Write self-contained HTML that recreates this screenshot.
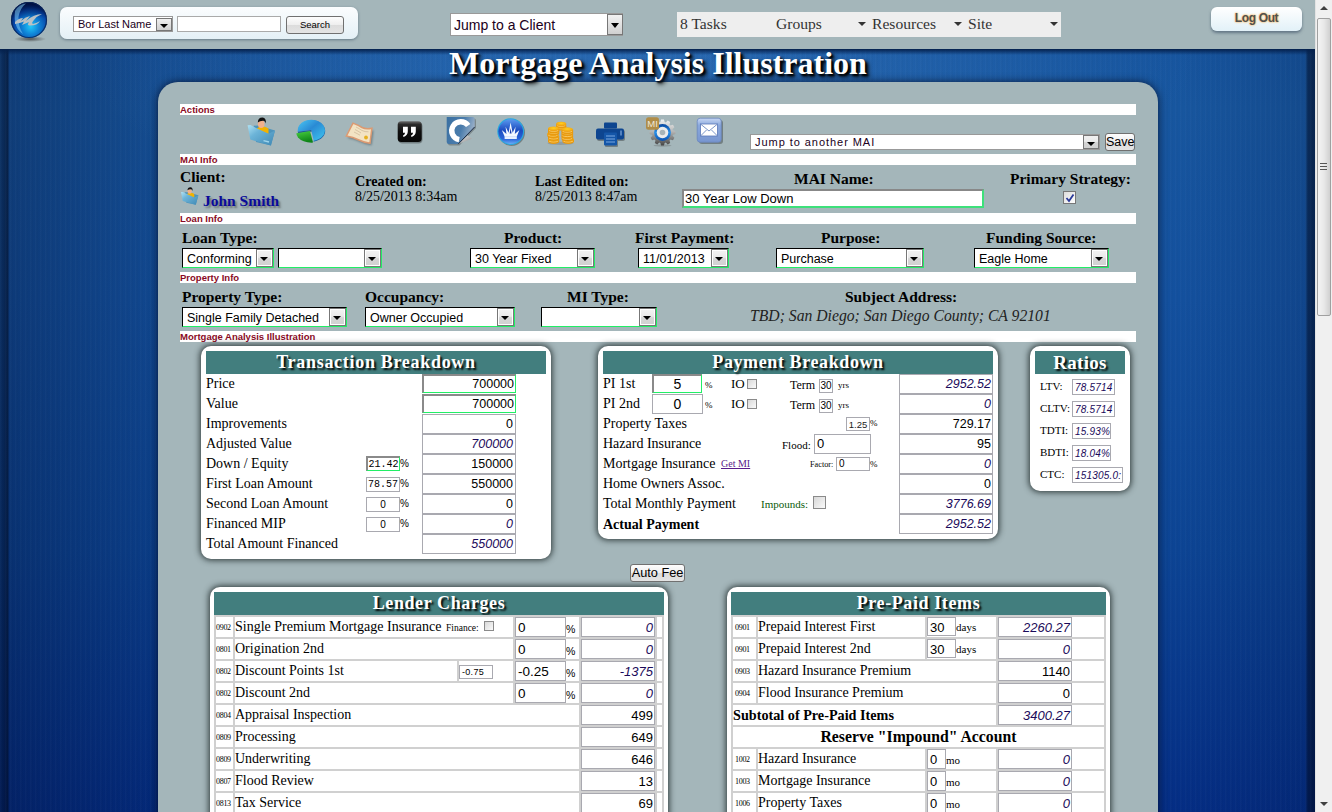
<!DOCTYPE html>
<html><head><meta charset="utf-8">
<style>
*{box-sizing:border-box;margin:0;padding:0}
html,body{width:1332px;height:812px;overflow:hidden}
body{position:relative;font-family:"Liberation Serif",serif;background:#0d3b7c}
.abs{position:absolute}
#hdr{position:absolute;left:0;top:0;width:1315px;height:49px;background:#a4b6ba}
#bg{position:absolute;left:0;top:49px;width:1315px;height:763px;
 background:repeating-linear-gradient(90deg,rgba(255,255,255,.018) 0,rgba(255,255,255,.018) 1px,rgba(0,0,0,.03) 2px,rgba(0,0,0,0) 3px,rgba(0,0,0,0) 5px),radial-gradient(ellipse 560px 170px at 640px 10px,rgba(90,160,230,.28),rgba(90,160,230,0)),
 linear-gradient(90deg,rgba(0,8,30,.45) 0,rgba(0,8,30,.68) 8px,rgba(0,10,40,.32) 9px,rgba(0,10,40,.14) 150px,rgba(0,10,40,.05) 300px,rgba(0,0,0,0) 450px,rgba(0,0,0,0) 1150px,rgba(0,10,40,.0) 1180px,rgba(0,10,40,.15) 1305px,rgba(0,8,30,.55) 1308px,rgba(0,8,30,.62) 1315px),
 linear-gradient(#16549e 0,#17569f 60px,#13509e 250px,#0c4494 500px,#042d84 763px)}
#bgtop{position:absolute;left:0;top:49px;width:1315px;height:6px;background:linear-gradient(#04204c,rgba(4,32,76,0))}
#sb{position:absolute;left:1315px;top:0;width:17px;height:812px;background:#f0f0f0;border-left:1px solid #e3e3e3}
#panel{position:absolute;left:158px;top:82px;width:1000px;height:740px;background:#a4b6ba;border-radius:20px 20px 0 0;box-shadow:0 0 8px rgba(0,0,20,.7)}
.bar{position:absolute;left:180px;width:956px;height:11px;background:#fff;font:bold 9.5px "Liberation Sans",sans-serif;color:#8a0a24;line-height:12px}
.lbl{position:absolute;font:bold 16px "Liberation Serif",serif;color:#000;white-space:nowrap}
.sel{position:absolute;height:20px;background:#fff;border-top:2px solid #222;border-left:2px solid #222;border-right:2px solid #3fe070;border-bottom:2px solid #3fe070;font:14px "Liberation Sans",sans-serif;color:#000;line-height:16px;padding-left:3px;white-space:nowrap;overflow:hidden}
.sel .dd{position:absolute;right:0;top:0;width:17px;height:16px;background:linear-gradient(#f4f4f4,#d8d8d8);border:1px solid #888}
.sel .dd:after{content:"";position:absolute;left:4px;top:6px;border-left:4px solid transparent;border-right:4px solid transparent;border-top:5px solid #000}

.s2{position:absolute;height:20px;background:#fff;border-top:1px solid #000;border-left:1px solid #000;border-right:1px solid #22ee66;border-bottom:1px solid #22ee66;font:12.5px "Liberation Sans",sans-serif;color:#000;line-height:20px;padding-left:4px;white-space:nowrap;overflow:hidden}
.dd{position:absolute;right:0;top:0;width:17px;height:18px;background:#fff;border:1px solid #777}
.dd:before{content:"";position:absolute;left:1px;top:1px;right:1px;bottom:1px;background:linear-gradient(#f2f2f2 0,#eaeaea 45%,#d6d6d6 55%,#d2d2d2 100%)}
.dd:after{content:"";position:absolute;left:3px;top:7px;border-left:4px solid transparent;border-right:4px solid transparent;border-top:4px solid #000}
.sx{position:absolute;font:bold 15.5px "Liberation Serif",serif;color:#000;white-space:nowrap;line-height:16px}
.box{position:absolute;background:#fff;border-radius:10px;box-shadow:0 0 6px 1px rgba(20,30,30,.85)}
.hd{position:absolute;background:#427e7e;color:#fff;text-align:center;font-family:"Liberation Serif",serif;font-weight:bold;text-shadow:2px 2px 2px #000;white-space:nowrap}
.t{position:absolute;white-space:nowrap;line-height:normal;color:#000}
.inp{position:absolute;background:#fff;border:1px solid #a9a9b0;white-space:nowrap;overflow:hidden;color:#000}
.inf{position:absolute;background:#fff;border-top:2px solid #8a8a8a;border-left:2px solid #8a8a8a;border-right:1px solid #22ee66;border-bottom:1px solid #22ee66;white-space:nowrap;overflow:hidden;color:#000}
.cb{position:absolute;border:1px solid #8a8a8a;background:linear-gradient(135deg,#d8d8d8,#fafafa)}
.btn{position:absolute;border-radius:3px;background:linear-gradient(#fdfdfd 0,#eeeeee 50%,#dcdcdc 51%,#e4e4e4 100%);border:1px solid #707070;color:#000;text-align:center;white-space:nowrap}
</style></head><body>
<div id="hdr"></div>
<div id="bg"></div>
<div id="bgtop"></div>
<div id="sb"><div class="abs" style="left:4px;top:6px;border-left:4px solid transparent;border-right:4px solid transparent;border-bottom:4px solid #404040"></div>
<div class="abs" style="left:1px;top:18px;width:14px;height:298px;border:1px solid #a0a0a0;border-radius:2px;background:linear-gradient(90deg,#f4f4f4,#e8e8e8 50%,#d0d0d0)"></div>
<div class="abs" style="left:4px;top:163px;width:7px;height:1px;background:#555;box-shadow:0 3px 0 #555,0 6px 0 #555"></div>
<div class="abs" style="left:4px;top:802px;border-left:4px solid transparent;border-right:4px solid transparent;border-top:4px solid #404040"></div></div>
<div id="panel"></div>


<!-- HEADER -->
<div class="abs" style="left:14px;top:36px;width:32px;height:6px;border-radius:50%;background:radial-gradient(closest-side,rgba(60,60,60,.8),rgba(60,60,60,0))"></div>
<svg class="abs" style="left:10px;top:1px" width="38" height="38" viewBox="0 0 38 38">
<defs>
<radialGradient id="gl" cx="0.55" cy="0.68" r="0.62"><stop offset="0" stop-color="#22c8f8"/><stop offset="0.35" stop-color="#0f86d8"/><stop offset="0.75" stop-color="#0646a8"/><stop offset="1" stop-color="#021e60"/></radialGradient>
<linearGradient id="gl2" x1="0" y1="0" x2="0" y2="1"><stop offset="0" stop-color="#000830" stop-opacity="0.7"/><stop offset="0.45" stop-color="#000830" stop-opacity="0"/></linearGradient>
</defs>
<circle cx="19" cy="19" r="18" fill="url(#gl)"/>
<circle cx="19" cy="19" r="18" fill="url(#gl2)"/>
<circle cx="19" cy="19" r="17.5" fill="none" stroke="#0a2458" stroke-width="1.2" opacity="0.8"/>
<path d="M5 10 Q9 3 16 2.5 Q10 7 8.5 16 Q8 25 13 33 Q3 27 5 10Z" fill="#8ad8ff" opacity="0.5"/>
<path d="M5 21 Q9 17 13 17 L11 20 Q15 16 20 15 L16 20 Q24 13 32 13 Q27 15 24 19 Q21 22 23 23 Q27 22 30 20 Q27 25 19 24.5 Q17 24 19 21 L12 24 L14 20.5 Q10 22 5 23Z" fill="#b9c1c5"/>
</svg>
<div class="abs" style="left:60px;top:7px;width:298px;height:32px;border-radius:7px;background:linear-gradient(#fbfdfe,#e4f0f6);box-shadow:0 1px 3px rgba(60,80,100,.6)"></div>
<div class="abs" style="left:73px;top:16px;width:100px;height:16px;background:#fff;border:1px solid #999;font:11px 'Liberation Sans',sans-serif;color:#200020;line-height:14px;padding-left:4px">Bor Last Name
 <div class="abs" style="left:82px;top:1px;width:16px;height:13px;background:linear-gradient(#f0f0f0,#cfcfcf);border:1px solid #777"><div class="abs" style="left:3px;top:5px;border-left:4px solid transparent;border-right:4px solid transparent;border-top:4px solid #000"></div></div>
</div>
<div class="abs" style="left:177px;top:16px;width:104px;height:16px;background:#fff;border:1px solid #aaa"></div>
<div class="abs" style="left:286px;top:16px;width:58px;height:18px;border-radius:3px;background:linear-gradient(#fdfdfd 0,#eeeeee 50%,#dcdcdc 51%,#e4e4e4 100%);border:1px solid #707070;font:9.5px 'Liberation Sans',sans-serif;color:#000;text-align:center;line-height:16px">Search</div>

<div class="abs" style="left:450px;top:13px;width:173px;height:23px;background:#fff;border:1px solid #999;font:14px 'Liberation Sans',sans-serif;color:#200020;line-height:22px;padding-left:3px">Jump to a Client
 <div class="abs" style="left:156px;top:0px;width:16px;height:21px;background:linear-gradient(#f2f2f2,#d0d0d0);border:1px solid #777"><div class="abs" style="left:3px;top:8px;border-left:4px solid transparent;border-right:4px solid transparent;border-top:5px solid #000"></div></div>
</div>

<div class="abs" style="left:677px;top:12px;width:384px;height:25px;background:#eeeeee;font:15.6px 'Liberation Serif',serif;color:#333;line-height:24px">
 <span class="abs" style="left:3px;top:0">8 Tasks</span>
 <span class="abs" style="left:99px;top:0">Groups</span>
 <span class="abs" style="left:181px;top:10px;border-left:4px solid transparent;border-right:4px solid transparent;border-top:4px solid #333"></span>
 <span class="abs" style="left:195px;top:0">Resources</span>
 <span class="abs" style="left:277px;top:10px;border-left:4px solid transparent;border-right:4px solid transparent;border-top:4px solid #333"></span>
 <span class="abs" style="left:291px;top:0">Site</span>
 <span class="abs" style="left:373px;top:10px;border-left:4px solid transparent;border-right:4px solid transparent;border-top:4px solid #333"></span>
</div>

<div class="abs" style="left:1211px;top:7px;width:91px;height:24px;border-radius:6px;background:linear-gradient(#ffffff,#e2f1f8);box-shadow:0 2px 3px rgba(70,90,110,.7);font:bold 12px 'Liberation Sans',sans-serif;letter-spacing:-0.35px;color:#505050;text-align:center;line-height:23px;text-shadow:0 0 2px #f8c47a,0 0 2px #f8c47a,0 0 1px #f8c47a">Log Out</div>

<div class="abs" style="left:440px;top:45px;width:436px;text-align:center;font:bold 32px 'Liberation Serif',serif;color:#fff;text-shadow:3px 3px 4px #000,2px 2px 2px #000;white-space:nowrap">Mortgage Analysis Illustration</div>
<div class="bar" style="top:104px">Actions</div>

<!-- ACTION ICONS -->
<svg class="abs" style="left:246px;top:116px" width="30" height="31" viewBox="0 0 30 31">
 <defs><linearGradient id="fo" x1="0" y1="0" x2="1" y2="1"><stop offset="0" stop-color="#b0e2f4"/><stop offset="0.35" stop-color="#6cb4d8"/><stop offset="1" stop-color="#3f88b4"/></linearGradient></defs>
 <path d="M7.6 9.7 L12 9.5 L29 14.5 L25 29.5 L10 26 Z" fill="#4d94bc"/>
 <path d="M10.4 13 Q13 10 16 10.5 Q20 10.5 22.5 12.5 L22.5 18 L10.4 15Z" fill="#f2b200"/>
 <ellipse cx="15.2" cy="8" rx="3.3" ry="4.1" fill="#f2b08c"/>
 <path d="M11.8 6.5 Q12 1.5 16.5 1.6 Q20.5 2 19.8 7.5 Q19 5 17.5 4.8 Q14 4.6 11.8 6.5Z" fill="#121212"/>
 <path d="M1.6 9.3 L4.5 9 L10 12 L22.7 17.7 L29 14.6 L24.8 29.5 L4.3 23.5 Z" fill="url(#fo)"/>
 <path d="M17.5 24.6 L23 26" stroke="#a0d4ea" stroke-width="1.3"/>
</svg>
<svg class="abs" style="left:296px;top:118px" width="31" height="27" viewBox="0 0 31 27">
 <defs><linearGradient id="pb" x1="0" y1="0" x2="1" y2="1"><stop offset="0" stop-color="#4cc8f4"/><stop offset="0.45" stop-color="#2a8ad4"/><stop offset="1" stop-color="#40c8f0"/></linearGradient>
 <linearGradient id="pg" x1="0" y1="0" x2="0.3" y2="1"><stop offset="0" stop-color="#4ad040"/><stop offset="1" stop-color="#0e8418"/></linearGradient></defs>
 <ellipse cx="15.6" cy="12.9" rx="13.6" ry="10.6" fill="#1a64a8"/>
 <ellipse cx="15.3" cy="12.3" rx="13.6" ry="10.6" fill="url(#pb)"/>
 <path d="M1.6 13.8 L15.2 11.9 L17.9 23.5 L14 23.8 Q5 22 1.6 13.8Z" fill="#a4b6ba"/>
 <path d="M1.6 13.8 L15.2 11.9 L15.8 13.5 L2.5 15.5Z" fill="#1c5a9a"/>
 <path d="M0.4 15.2 L14 13 L17 24.6 Q7 25 2 19.5 Q0.4 17.5 0.4 15.2Z" fill="url(#pg)"/>
</svg>
<svg class="abs" style="left:344px;top:120px" width="32" height="28" viewBox="0 0 32 28">
 <defs><filter id="cs" x="-20%" y="-20%" width="140%" height="140%"><feGaussianBlur stdDeviation="0.9"/></filter></defs>
 <path d="M10.5 5 Q15.5 7 19.5 9.5 Q23.5 11.5 29.4 10.2 L27.5 25.2 Q21.5 24.5 16.5 22 Q10.5 19 3.8 18.1 Z" fill="#3a4a50" opacity="0.55" filter="url(#cs)"/>
 <path d="M9 3.1 Q14 5 18 7.5 Q22 9.5 27.9 8.2 L26 23.2 Q20 22.5 15 20 Q9 17 2.3 16.1 Z" fill="#f3e3c3" stroke="#dc9a72" stroke-width="1.5"/>
 <path d="M12 7 Q15 8.5 18 10.5 Q21 12 24.5 11.8 M11 9.5 Q14 11 17 13 M10 12 Q13 13.5 16 15.2" stroke="#b8a080" stroke-width="0.6" fill="none" opacity="0.8"/>
 <circle cx="22" cy="17.5" r="1.9" fill="#e6b020"/>
</svg>
<svg class="abs" style="left:396px;top:120px" width="28" height="25" viewBox="0 0 28 25">
 <defs><linearGradient id="qg" x1="0" y1="0" x2="0" y2="1"><stop offset="0" stop-color="#6a6a6a"/><stop offset="0.15" stop-color="#2a2a2a"/><stop offset="0.5" stop-color="#0e0e0e"/><stop offset="1" stop-color="#080808"/></linearGradient></defs>
 <rect x="2.5" y="2.6" width="24" height="21" rx="4" fill="#000" opacity="0.3"/>
 <rect x="1.7" y="1.3" width="24" height="20.7" rx="3.5" fill="url(#qg)"/>
 <path d="M7 6.8 h4.8 v4.8 q0 3.8 -4.2 5.5 l-0.7 -1.3 q2 -1 2.2 -3 h-2.1z M15 6.8 h4.8 v4.8 q0 3.8 -4.2 5.5 l-0.7 -1.3 q2 -1 2.2 -3 h-2.1z" fill="#fff"/>
</svg>
<svg class="abs" style="left:446px;top:116px" width="31" height="31" viewBox="0 0 31 31">
 <defs><linearGradient id="cl" x1="0" y1="0" x2="1" y2="0.3"><stop offset="0" stop-color="#3a70a2"/><stop offset="0.6" stop-color="#4a7cac"/><stop offset="1" stop-color="#9ab0c8"/></linearGradient>
 <linearGradient id="cp" x1="0" y1="0" x2="1" y2="1"><stop offset="0" stop-color="#e8e8e8"/><stop offset="1" stop-color="#8a8a8a"/></linearGradient></defs>
 <path d="M2 2.5 h26 q2 0 2 2 V12 L13.5 29.5 H4 q-2 0 -2 -2Z" fill="#000" opacity="0.25"/>
 <path d="M0.7 1.1 h26 q2 0 2 2 V10.9 L12.2 28.1 H2.7 q-2 0 -2 -2Z" fill="url(#cl)"/>
 <path d="M22.2 9.6 A9.05 9.05 0 1 0 13.2 23.7" stroke="#fff" stroke-width="5.3" fill="none"/>
 <path d="M12.2 28.1 L25.9 22.8 L21.9 19.3 Z" fill="url(#cp)"/>
 <path d="M28.7 10.9 L12.2 28.1" stroke="#1a2a44" stroke-width="1"/>
</svg>
<svg class="abs" style="left:496px;top:117px" width="31" height="31" viewBox="0 0 31 31">
 <defs><linearGradient id="cr" x1="0" y1="0" x2="0" y2="1"><stop offset="0" stop-color="#5a98ee"/><stop offset="0.45" stop-color="#1c4cc0"/><stop offset="0.8" stop-color="#2a64d8"/><stop offset="1" stop-color="#6aaaf4"/></linearGradient></defs>
 <circle cx="15.6" cy="15.5" r="13.4" fill="#000" opacity="0.3"/>
 <circle cx="14.7" cy="14.6" r="13.4" fill="#28a8e0"/>
 <circle cx="14.7" cy="14.6" r="12.3" fill="url(#cr)"/>
 <path d="M8.6 19.5 L5.8 13 L10.4 17 L9.6 9.8 L12.6 15.8 L14.6 5.5 L16.6 15.8 L19.6 9.8 L18.8 17 L23.4 13 L20.8 19.5 Z" fill="#f4f8ff"/>
 <path d="M14.6 11 L13.6 16.5 L15.6 16.5Z" fill="#1a3aa8"/>
 <rect x="8.6" y="19.2" width="12.2" height="2.8" fill="#e8f0ff"/>
</svg>
<svg class="abs" style="left:546px;top:121px" width="29" height="24" viewBox="0 0 29 24">
<defs><radialGradient id="gct" cx="0.5" cy="0.4" r="0.6"><stop offset="0" stop-color="#ffd020"/><stop offset="1" stop-color="#f0a010"/></radialGradient></defs>
<ellipse cx="14.5" cy="22.3" rx="13" ry="1.6" fill="#6a7078" opacity="0.35"/>
<path d="M10.2 5.2 v2.4 a5 2.0 0 0 0 10 0 v-2.4Z" fill="#e89a10"/><path d="M11.2 7.0 a5 2.0 0 0 0 8 0" stroke="#ffe08a" stroke-width="0.8" fill="none" opacity="0.8"/><ellipse cx="15.2" cy="5.2" rx="5" ry="2.0" fill="url(#gct)"/>
<path d="M10.2 2.8 v2.4 a5 2.0 0 0 0 10 0 v-2.4Z" fill="#e89a10"/><path d="M11.2 4.6 a5 2.0 0 0 0 8 0" stroke="#ffe08a" stroke-width="0.8" fill="none" opacity="0.8"/><ellipse cx="15.2" cy="2.8" rx="5" ry="2.0" fill="url(#gct)"/>
<path d="M2.0 18.2 v2.6 a5.6 2.1 0 0 0 11.2 0 v-2.6Z" fill="#e89a10"/><path d="M3.0 20.1 a5.6 2.1 0 0 0 9.2 0" stroke="#ffe08a" stroke-width="0.8" fill="none" opacity="0.8"/><ellipse cx="7.6" cy="18.2" rx="5.6" ry="2.1" fill="url(#gct)"/>
<path d="M2.0 15.2 v2.6 a5.6 2.1 0 0 0 11.2 0 v-2.6Z" fill="#e89a10"/><path d="M3.0 17.1 a5.6 2.1 0 0 0 9.2 0" stroke="#ffe08a" stroke-width="0.8" fill="none" opacity="0.8"/><ellipse cx="7.6" cy="15.2" rx="5.6" ry="2.1" fill="url(#gct)"/>
<path d="M1.3 12.4 v2.6 a5.6 2.1 0 0 0 11.2 0 v-2.6Z" fill="#e89a10"/><path d="M2.3 14.3 a5.6 2.1 0 0 0 9.2 0" stroke="#ffe08a" stroke-width="0.8" fill="none" opacity="0.8"/><ellipse cx="6.9" cy="12.4" rx="5.6" ry="2.1" fill="url(#gct)"/>
<path d="M2.0 9.6 v2.6 a5.6 2.1 0 0 0 11.2 0 v-2.6Z" fill="#e89a10"/><path d="M3.0 11.5 a5.6 2.1 0 0 0 9.2 0" stroke="#ffe08a" stroke-width="0.8" fill="none" opacity="0.8"/><ellipse cx="7.6" cy="9.6" rx="5.6" ry="2.1" fill="url(#gct)"/>
<path d="M2.0 7.6 v2.6 a5.6 2.1 0 0 0 11.2 0 v-2.6Z" fill="#e89a10"/><path d="M3.0 9.5 a5.6 2.1 0 0 0 9.2 0" stroke="#ffe08a" stroke-width="0.8" fill="none" opacity="0.8"/><ellipse cx="7.6" cy="7.6" rx="5.6" ry="2.1" fill="url(#gct)"/>
<path d="M16.4 18.2 v2.6 a5.8 2.1 0 0 0 11.6 0 v-2.6Z" fill="#e89a10"/><path d="M17.4 20.1 a5.8 2.1 0 0 0 9.6 0" stroke="#ffe08a" stroke-width="0.8" fill="none" opacity="0.8"/><ellipse cx="22.2" cy="18.2" rx="5.8" ry="2.1" fill="url(#gct)"/>
<path d="M15.5 15.6 v2.6 a5.8 2.1 0 0 0 11.6 0 v-2.6Z" fill="#e89a10"/><path d="M16.5 17.5 a5.8 2.1 0 0 0 9.6 0" stroke="#ffe08a" stroke-width="0.8" fill="none" opacity="0.8"/><ellipse cx="21.3" cy="15.6" rx="5.8" ry="2.1" fill="url(#gct)"/>
<path d="M15.5 12.8 v2.6 a5.8 2.1 0 0 0 11.6 0 v-2.6Z" fill="#e89a10"/><path d="M16.5 14.7 a5.8 2.1 0 0 0 9.6 0" stroke="#ffe08a" stroke-width="0.8" fill="none" opacity="0.8"/><ellipse cx="21.3" cy="12.8" rx="5.8" ry="2.1" fill="url(#gct)"/>
<path d="M15.5 10.2 v2.6 a5.8 2.1 0 0 0 11.6 0 v-2.6Z" fill="#e89a10"/><path d="M16.5 12.1 a5.8 2.1 0 0 0 9.6 0" stroke="#ffe08a" stroke-width="0.8" fill="none" opacity="0.8"/><ellipse cx="21.3" cy="10.2" rx="5.8" ry="2.1" fill="url(#gct)"/>
<path d="M15.5 8.4 v2.6 a5.8 2.1 0 0 0 11.6 0 v-2.6Z" fill="#e89a10"/><path d="M16.5 10.3 a5.8 2.1 0 0 0 9.6 0" stroke="#ffe08a" stroke-width="0.8" fill="none" opacity="0.8"/><ellipse cx="21.3" cy="8.4" rx="5.8" ry="2.1" fill="url(#gct)"/>
</svg>
<svg class="abs" style="left:595px;top:122px" width="31" height="25" viewBox="0 0 31 25">
 <g fill="#000" opacity="0.3" transform="translate(1,1)"><rect x="1" y="7" width="28" height="11" rx="2"/><rect x="9" y="11" width="13" height="13" rx="1"/></g>
 <rect x="9" y="0.5" width="13" height="6" rx="1" fill="#0d4590"/>
 <rect x="1" y="6.5" width="28" height="11" rx="2" fill="#0d4590"/>
 <rect x="9" y="10.5" width="13" height="13" rx="1" fill="#1456a8"/>
 <path d="M11 14 h9 M11 17 h9 M11 20 h9" stroke="#7aa8e0" stroke-width="1"/>
 <path d="M26 8.5 v5" stroke="#9cc0ee" stroke-width="1"/>
</svg>
<svg class="abs" style="left:645px;top:116px" width="32" height="31" viewBox="0 0 32 31">
 <defs><linearGradient id="gr" x1="0" y1="0" x2="0" y2="1"><stop offset="0" stop-color="#f2f2f2"/><stop offset="0.45" stop-color="#b8b8b8"/><stop offset="1" stop-color="#454545"/></linearGradient>
 <linearGradient id="gb" x1="0" y1="0" x2="0" y2="1"><stop offset="0" stop-color="#0a48a0"/><stop offset="0.5" stop-color="#2a90e8"/><stop offset="1" stop-color="#0a50b0"/></linearGradient></defs>
 <ellipse cx="17.5" cy="29.5" rx="9" ry="1.2" fill="#555" opacity="0.3"/>
 <g transform="translate(17.5,16.5)">
 <path d="M10.38 -2.15 L12.92 -1.43 L12.92 1.43 L10.38 2.15 L10.06 3.33 L11.90 5.23 L10.48 7.70 L7.92 7.05 L7.05 7.92 L7.70 10.48 L5.23 11.90 L3.33 10.06 L2.15 10.38 L1.43 12.92 L-1.43 12.92 L-2.15 10.38 L-3.33 10.06 L-5.23 11.90 L-7.70 10.48 L-7.05 7.92 L-7.92 7.05 L-10.48 7.70 L-11.90 5.23 L-10.06 3.33 L-10.38 2.15 L-12.92 1.43 L-12.92 -1.43 L-10.38 -2.15 L-10.06 -3.33 L-11.90 -5.23 L-10.48 -7.70 L-7.92 -7.05 L-7.05 -7.92 L-7.70 -10.48 L-5.23 -11.90 L-3.33 -10.06 L-2.15 -10.38 L-1.43 -12.92 L1.43 -12.92 L2.15 -10.38 L3.33 -10.06 L5.23 -11.90 L7.70 -10.48 L7.05 -7.92 L7.92 -7.05 L10.48 -7.70 L11.90 -5.23 L10.06 -3.33Z" fill="url(#gr)"/>
 <circle r="8.4" fill="url(#gb)"/>
 <circle r="5.8" fill="#ececec"/>
 <circle r="2.8" fill="#a8b4b8"/>
 </g>
 <rect x="1" y="1.3" width="13" height="12.5" rx="2.5" fill="#b08d48"/>
 <text x="7.5" y="11.2" font-family="Liberation Sans" font-size="9.5" fill="#efe8d8" text-anchor="middle">MI</text>
</svg>
<svg class="abs" style="left:696px;top:117px" width="30" height="30" viewBox="0 0 30 30">
 <defs><linearGradient id="ml" x1="0" y1="0" x2="0" y2="1"><stop offset="0" stop-color="#c8d8f4"/><stop offset="0.3" stop-color="#8aa8dc"/><stop offset="1" stop-color="#7896d0"/></linearGradient></defs>
 <rect x="3" y="3" width="24" height="24" rx="3" fill="#000" opacity="0.3"/>
 <rect x="1.2" y="1.2" width="24" height="24" rx="3" fill="url(#ml)" stroke="#6a88c0" stroke-width="0.8"/>
 <rect x="4.5" y="7" width="17" height="12" fill="#fff" stroke="#5a78b8" stroke-width="0.8"/>
 <path d="M4.5 7 L13 14 L21.5 7 M4.5 19 L10.5 13 M21.5 19 L15.5 13" stroke="#6a88c0" stroke-width="0.9" fill="none"/>
</svg>
<div class="bar" style="top:154px">MAI Info</div>
<div class="bar" style="top:213px">Loan Info</div>
<div class="bar" style="top:272px">Property Info</div>

<!-- JUMP MAI -->
<div class="abs" style="left:750px;top:134px;width:350px;height:16px;background:#fff;border:1px solid #999;font:11px 'Liberation Sans',sans-serif;letter-spacing:0.95px;color:#200020;line-height:15px;padding-left:4px">Jump to another MAI
 <div class="abs" style="left:332px;top:0px;width:16px;height:14px;background:linear-gradient(#f0f0f0,#eaeaea 45%,#d4d4d4 55%,#d0d0d0);border:1px solid #777"><div class="abs" style="left:3px;top:6px;border-left:4px solid transparent;border-right:4px solid transparent;border-top:4px solid #000"></div></div>
</div>
<div class="abs" style="left:1105px;top:133px;width:30px;height:18px;border-radius:3px;background:linear-gradient(#fdfdfd 0,#eeeeee 50%,#dcdcdc 51%,#e4e4e4 100%);border:1px solid #707070;font:12.5px 'Liberation Sans',sans-serif;color:#000;text-align:center;line-height:16px">Save</div>

<!-- MAI INFO -->
<div class="sx" style="left:180px;top:169px">Client:</div>
<svg class="abs" style="left:180px;top:186px" width="19" height="20" viewBox="0 0 30 31">
 <path d="M7.6 9.7 L12 9.5 L29 14.5 L25 29.5 L10 26 Z" fill="#4d94bc"/>
 <path d="M10.4 13 Q13 10 16 10.5 Q20 10.5 22.5 12.5 L22.5 18 L10.4 15Z" fill="#f2b200"/>
 <ellipse cx="15.2" cy="8" rx="3.3" ry="4.1" fill="#f2b08c"/>
 <path d="M11.8 6.5 Q12 1.5 16.5 1.6 Q20.5 2 19.8 7.5 Q19 5 17.5 4.8 Q14 4.6 11.8 6.5Z" fill="#121212"/>
 <path d="M1.6 9.3 L4.5 9 L10 12 L22.7 17.7 L29 14.6 L24.8 29.5 L4.3 23.5 Z" fill="url(#fo)"/>
</svg>
<div class="sx" style="left:203px;top:193px;color:#0a0a9a;text-shadow:2px 2px 2px rgba(60,60,60,.55)">John Smith</div>
<div class="abs" style="left:355px;top:173px;font:bold 14.2px 'Liberation Serif',serif;white-space:nowrap">Created on:</div>
<div class="abs" style="left:355px;top:189px;font:14px 'Liberation Serif',serif;white-space:nowrap">8/25/2013 8:34am</div>
<div class="abs" style="left:535px;top:173px;font:bold 14.2px 'Liberation Serif',serif;white-space:nowrap">Last Edited on:</div>
<div class="abs" style="left:535px;top:189px;font:14px 'Liberation Serif',serif;white-space:nowrap">8/25/2013 8:47am</div>
<div class="sx" style="left:794px;top:171px">MAI Name:</div>
<div class="abs" style="left:682px;top:189px;width:302px;height:19px;background:#fff;border-top:2px solid #888;border-left:2px solid #888;border-right:2px solid #3de07a;border-bottom:2px solid #3de07a;font:13px 'Liberation Sans',sans-serif;line-height:16px;padding-left:1px;white-space:nowrap">30 Year Low Down</div>
<div class="sx" style="left:1010px;top:171px">Primary Strategy:</div>
<div class="abs" style="left:1063px;top:191px;width:13px;height:13px;border:1px solid #777;background:linear-gradient(135deg,#dcdcdc,#fff)"><svg class="abs" style="left:1px;top:1px" width="10" height="10" viewBox="0 0 10 10"><path d="M1.5 5 L4 8 L8.5 1.5" stroke="#2a3a9a" stroke-width="1.8" fill="none"/></svg></div>

<!-- LOAN INFO -->
<div class="sx" style="left:182px;top:230px">Loan Type:</div>
<div class="s2" style="left:182px;top:248px;width:92px">Conforming<div class="dd"></div></div>
<div class="s2" style="left:278px;top:248px;width:104px"><div class="dd"></div></div>
<div class="sx" style="left:504px;top:230px">Product:</div>
<div class="s2" style="left:470px;top:248px;width:125px">30 Year Fixed<div class="dd"></div></div>
<div class="sx" style="left:635px;top:230px">First Payment:</div>
<div class="s2" style="left:638px;top:248px;width:91px">11/01/2013<div class="dd"></div></div>
<div class="sx" style="left:821px;top:230px">Purpose:</div>
<div class="s2" style="left:776px;top:248px;width:148px">Purchase<div class="dd"></div></div>
<div class="sx" style="left:986px;top:230px">Funding Source:</div>
<div class="s2" style="left:974px;top:248px;width:135px">Eagle Home<div class="dd"></div></div>

<!-- PROPERTY INFO -->
<div class="sx" style="left:182px;top:289px">Property Type:</div>
<div class="s2" style="left:182px;top:307px;width:165px">Single Family Detached<div class="dd"></div></div>
<div class="sx" style="left:365px;top:289px">Occupancy:</div>
<div class="s2" style="left:365px;top:307px;width:150px">Owner Occupied<div class="dd"></div></div>
<div class="sx" style="left:567px;top:289px">MI Type:</div>
<div class="s2" style="left:541px;top:307px;width:116px"><div class="dd"></div></div>
<div class="sx" style="left:845px;top:289px">Subject Address:</div>
<div class="abs" style="left:750px;top:307px;font:italic 15.7px 'Liberation Serif',serif;white-space:nowrap;color:#222">TBD; San Diego; San Diego County; CA 92101</div>
<div class="bar" style="top:331px">Mortgage Analysis Illustration</div>

<div class="box" style="left:201px;top:346px;width:350px;height:213px"></div>
<div class="hd" style="left:206px;top:351px;width:340px;height:23px;font-size:18px;letter-spacing:0.7px;line-height:23px">Transaction Breakdown</div>
<div class="t" style="left:206px;top:376px;font:14px 'Liberation Serif',serif;">Price</div>
<div class="inf" style="left:422px;top:374px;width:94px;height:19px;text-align:right;font:12.5px 'Liberation Sans',sans-serif;line-height:17px;padding:0 1px;">700000</div>
<div class="t" style="left:206px;top:396px;font:14px 'Liberation Serif',serif;">Value</div>
<div class="inf" style="left:422px;top:394px;width:94px;height:19px;text-align:right;font:12.5px 'Liberation Sans',sans-serif;line-height:17px;padding:0 1px;">700000</div>
<div class="t" style="left:206px;top:416px;font:14px 'Liberation Serif',serif;">Improvements</div>
<div class="inp" style="left:422px;top:414px;width:94px;height:20px;text-align:right;font:12.5px 'Liberation Sans',sans-serif;line-height:18px;padding:0 2px;">0</div>
<div class="t" style="left:206px;top:436px;font:14px 'Liberation Serif',serif;">Adjusted Value</div>
<div class="inp" style="left:422px;top:434px;width:94px;height:20px;text-align:right;font:italic 12.5px 'Liberation Sans',sans-serif;line-height:18px;padding:0 2px;color:#1a0a5a;">700000</div>
<div class="t" style="left:206px;top:456px;font:14px 'Liberation Serif',serif;">Down / Equity</div>
<div class="inp" style="left:422px;top:454px;width:94px;height:20px;text-align:right;font:12.5px 'Liberation Sans',sans-serif;line-height:18px;padding:0 2px;">150000</div>
<div class="t" style="left:206px;top:476px;font:14px 'Liberation Serif',serif;">First Loan Amount</div>
<div class="inp" style="left:422px;top:474px;width:94px;height:20px;text-align:right;font:12.5px 'Liberation Sans',sans-serif;line-height:18px;padding:0 2px;">550000</div>
<div class="t" style="left:206px;top:496px;font:14px 'Liberation Serif',serif;">Second Loan Amount</div>
<div class="inp" style="left:422px;top:494px;width:94px;height:20px;text-align:right;font:12.5px 'Liberation Sans',sans-serif;line-height:18px;padding:0 2px;">0</div>
<div class="t" style="left:206px;top:516px;font:14px 'Liberation Serif',serif;">Financed MIP</div>
<div class="inp" style="left:422px;top:514px;width:94px;height:20px;text-align:right;font:italic 12.5px 'Liberation Sans',sans-serif;line-height:18px;padding:0 2px;color:#1a0a5a;">0</div>
<div class="t" style="left:206px;top:536px;font:14px 'Liberation Serif',serif;">Total Amount Financed</div>
<div class="inp" style="left:422px;top:534px;width:94px;height:20px;text-align:right;font:italic 12.5px 'Liberation Sans',sans-serif;line-height:18px;padding:0 2px;color:#1a0a5a;">550000</div>
<div class="inf" style="left:366px;top:456px;width:34px;height:15px;text-align:center;font:10px 'Liberation Mono',monospace;line-height:13px;padding:0 0px;">21.42</div>
<div class="t" style="left:400px;top:458px;font:10px 'Liberation Sans',sans-serif;">%</div>
<div class="inp" style="left:366px;top:477px;width:34px;height:15px;text-align:center;font:10px 'Liberation Mono',monospace;line-height:13px;padding:0 0px;">78.57</div>
<div class="t" style="left:400px;top:478px;font:10px 'Liberation Sans',sans-serif;">%</div>
<div class="inp" style="left:366px;top:497px;width:34px;height:15px;text-align:center;font:10px 'Liberation Sans',sans-serif;line-height:13px;padding:0 0px;">0</div>
<div class="t" style="left:400px;top:498px;font:10px 'Liberation Sans',sans-serif;">%</div>
<div class="inp" style="left:366px;top:517px;width:34px;height:15px;text-align:center;font:10px 'Liberation Sans',sans-serif;line-height:13px;padding:0 0px;">0</div>
<div class="t" style="left:400px;top:518px;font:10px 'Liberation Sans',sans-serif;">%</div>
<div class="box" style="left:598px;top:346px;width:400px;height:193px"></div>
<div class="hd" style="left:603px;top:351px;width:390px;height:23px;font-size:18px;letter-spacing:0.6px;line-height:23px">Payment Breakdown</div>
<div class="t" style="left:603px;top:376px;font:14px 'Liberation Serif',serif;">PI 1st</div>
<div class="t" style="left:603px;top:396px;font:14px 'Liberation Serif',serif;">PI 2nd</div>
<div class="t" style="left:603px;top:416px;font:14px 'Liberation Serif',serif;">Property Taxes</div>
<div class="t" style="left:603px;top:436px;font:14px 'Liberation Serif',serif;">Hazard Insurance</div>
<div class="t" style="left:603px;top:456px;font:14px 'Liberation Serif',serif;">Mortgage Insurance</div>
<div class="t" style="left:603px;top:476px;font:14px 'Liberation Serif',serif;">Home Owners Assoc.</div>
<div class="t" style="left:603px;top:496px;font:14px 'Liberation Serif',serif;">Total Monthly Payment</div>
<div class="t" style="left:603px;top:517px;font:bold 14px 'Liberation Serif',serif;">Actual Payment</div>
<div class="inp" style="left:899px;top:374px;width:94px;height:20px;text-align:right;font:italic 12.5px 'Liberation Sans',sans-serif;line-height:18px;padding:0 1px;color:#1a0a5a;">2952.52</div>
<div class="inp" style="left:899px;top:394px;width:94px;height:20px;text-align:right;font:italic 12.5px 'Liberation Sans',sans-serif;line-height:18px;padding:0 1px;color:#1a0a5a;">0</div>
<div class="inp" style="left:899px;top:414px;width:94px;height:20px;text-align:right;font:12.5px 'Liberation Sans',sans-serif;line-height:18px;padding:0 1px;">729.17</div>
<div class="inp" style="left:899px;top:434px;width:94px;height:20px;text-align:right;font:12.5px 'Liberation Sans',sans-serif;line-height:18px;padding:0 1px;">95</div>
<div class="inp" style="left:899px;top:454px;width:94px;height:20px;text-align:right;font:italic 12.5px 'Liberation Sans',sans-serif;line-height:18px;padding:0 1px;color:#1a0a5a;">0</div>
<div class="inp" style="left:899px;top:474px;width:94px;height:20px;text-align:right;font:12.5px 'Liberation Sans',sans-serif;line-height:18px;padding:0 1px;">0</div>
<div class="inp" style="left:899px;top:494px;width:94px;height:20px;text-align:right;font:italic 12.5px 'Liberation Sans',sans-serif;line-height:18px;padding:0 1px;color:#1a0a5a;">3776.69</div>
<div class="inp" style="left:899px;top:514px;width:94px;height:20px;text-align:right;font:italic 12.5px 'Liberation Sans',sans-serif;line-height:18px;padding:0 1px;color:#1a0a5a;">2952.52</div>
<div class="inf" style="left:652px;top:374px;width:50px;height:19px;text-align:center;font:14px 'Liberation Sans',sans-serif;line-height:17px;padding:0 3px;">5</div>
<div class="inp" style="left:652px;top:394px;width:51px;height:20px;text-align:center;font:14px 'Liberation Sans',sans-serif;line-height:18px;padding:0 3px;">0</div>
<div class="t" style="left:705px;top:380px;font:9px 'Liberation Serif',serif;">%</div>
<div class="t" style="left:731px;top:376px;font:13px 'Liberation Serif',serif;">IO</div>
<div class="cb" style="left:747px;top:379px;width:10px;height:10px"></div>
<div class="t" style="left:790px;top:378px;font:12px 'Liberation Serif',serif;">Term</div>
<div class="inp" style="left:819px;top:379px;width:14px;height:14px;text-align:center;font:10px 'Liberation Sans',sans-serif;line-height:12px;padding:0 0px;">30</div>
<div class="t" style="left:838px;top:380px;font:9px 'Liberation Serif',serif;">yrs</div>
<div class="t" style="left:705px;top:400px;font:9px 'Liberation Serif',serif;">%</div>
<div class="t" style="left:731px;top:396px;font:13px 'Liberation Serif',serif;">IO</div>
<div class="cb" style="left:747px;top:399px;width:10px;height:10px"></div>
<div class="t" style="left:790px;top:398px;font:12px 'Liberation Serif',serif;">Term</div>
<div class="inp" style="left:819px;top:399px;width:14px;height:14px;text-align:center;font:10px 'Liberation Sans',sans-serif;line-height:12px;padding:0 0px;">30</div>
<div class="t" style="left:838px;top:400px;font:9px 'Liberation Serif',serif;">yrs</div>
<div class="inp" style="left:846px;top:417px;width:24px;height:14px;text-align:center;font:9.5px 'Liberation Sans',sans-serif;line-height:12px;padding:0 0px;padding-top:1px;color:#222">1.25</div>
<div class="t" style="left:870px;top:418px;font:9px 'Liberation Serif',serif;">%</div>
<div class="t" style="left:782px;top:439px;font:11px 'Liberation Serif',serif;">Flood:</div>
<div class="inp" style="left:814px;top:434px;width:57px;height:20px;text-align:left;font:13px 'Liberation Sans',sans-serif;line-height:18px;padding:0 2px;">0</div>
<div class="t" style="left:721px;top:458px;font:10px 'Liberation Serif',serif;color:#5a1a8b;text-decoration:underline">Get MI</div>
<div class="t" style="left:810px;top:460px;font:8.25px 'Liberation Serif',serif;">Factor:</div>
<div class="inp" style="left:836px;top:457px;width:34px;height:14px;text-align:left;font:10px 'Liberation Sans',sans-serif;line-height:12px;padding:0 2px;">0</div>
<div class="t" style="left:870px;top:459px;font:9px 'Liberation Serif',serif;">%</div>
<div class="t" style="left:761px;top:498px;font:11px 'Liberation Serif',serif;color:#0a5a0a">Impounds:</div>
<div class="cb" style="left:813px;top:496px;width:13px;height:13px"></div>
<div class="box" style="left:1030px;top:346px;width:100px;height:145px"></div>
<div class="hd" style="left:1035px;top:351px;width:90px;height:23px;font-size:19px;letter-spacing:0.3px;line-height:23px">Ratios</div>
<div class="t" style="left:1040px;top:380px;font:11px 'Liberation Serif',serif;">LTV:</div>
<div class="inp" style="left:1072px;top:379px;width:43px;height:16px;text-align:left;font:italic 10px 'Liberation Sans',sans-serif;line-height:14px;padding:0 2px;color:#1a0a5a;overflow:hidden;white-space:nowrap;padding-top:1px;letter-spacing:0.2px">78.5714</div>
<div class="t" style="left:1040px;top:402px;font:11px 'Liberation Serif',serif;">CLTV:</div>
<div class="inp" style="left:1072px;top:401px;width:43px;height:16px;text-align:left;font:italic 10px 'Liberation Sans',sans-serif;line-height:14px;padding:0 2px;color:#1a0a5a;overflow:hidden;white-space:nowrap;padding-top:1px;letter-spacing:0.2px">78.5714</div>
<div class="t" style="left:1040px;top:424px;font:11px 'Liberation Serif',serif;">TDTI:</div>
<div class="inp" style="left:1072px;top:423px;width:39px;height:16px;text-align:left;font:italic 10px 'Liberation Sans',sans-serif;line-height:14px;padding:0 2px;color:#1a0a5a;overflow:hidden;white-space:nowrap;padding-top:1px;letter-spacing:0.2px">15.93%</div>
<div class="t" style="left:1040px;top:446px;font:11px 'Liberation Serif',serif;">BDTI:</div>
<div class="inp" style="left:1072px;top:445px;width:39px;height:16px;text-align:left;font:italic 10px 'Liberation Sans',sans-serif;line-height:14px;padding:0 2px;color:#1a0a5a;overflow:hidden;white-space:nowrap;padding-top:1px;letter-spacing:0.2px">18.04%</div>
<div class="t" style="left:1040px;top:468px;font:11px 'Liberation Serif',serif;">CTC:</div>
<div class="inp" style="left:1072px;top:467px;width:51px;height:16px;text-align:left;font:italic 10px 'Liberation Sans',sans-serif;line-height:14px;padding:0 2px;color:#1a0a5a;overflow:hidden;white-space:nowrap;padding-top:1px;letter-spacing:0.2px">151305.0:</div>
<div class="box" style="left:210px;top:587px;width:458px;height:253px"></div>
<div class="hd" style="left:214px;top:592px;width:450px;height:23px;font-size:18px;letter-spacing:0.6px;line-height:23px">Lender Charges</div>
<div class="abs" style="left:214px;top:615px;width:450px;height:230px;background:#d0d0d0"></div>
<div class="abs" style="left:216px;top:617px;width:17px;height:20px;background:#fff"></div>
<div class="t" style="left:216px;top:623px;font:8px 'Liberation Serif',serif;letter-spacing:-0.3px">0902</div>
<div class="abs" style="left:235px;top:617px;width:278px;height:20px;background:#fff"></div>
<div class="t" style="left:235px;top:619px;font:14px 'Liberation Serif',serif;">Single Premium Mortgage Insurance</div>
<div class="inp" style="left:515px;top:617px;width:51px;height:20px;text-align:left;font:13.5px 'Liberation Sans',sans-serif;line-height:18px;padding:0 2px;padding-top:1px">0</div>
<div class="abs" style="left:566px;top:617px;width:13px;height:20px;background:#fff"></div>
<div class="t" style="left:566px;top:623px;font:10.5px 'Liberation Sans',sans-serif;">%</div>
<div class="inp" style="left:581px;top:617px;width:74px;height:20px;text-align:right;font:italic 13px 'Liberation Sans',sans-serif;line-height:18px;padding:0 1px;color:#1a0a5a;padding-top:1px">0</div>
<div class="abs" style="left:657px;top:617px;width:5px;height:20px;background:#fff"></div>
<div class="abs" style="left:216px;top:639px;width:17px;height:20px;background:#fff"></div>
<div class="t" style="left:216px;top:645px;font:8px 'Liberation Serif',serif;letter-spacing:-0.3px">0801</div>
<div class="abs" style="left:235px;top:639px;width:278px;height:20px;background:#fff"></div>
<div class="t" style="left:235px;top:641px;font:14px 'Liberation Serif',serif;">Origination 2nd</div>
<div class="inp" style="left:515px;top:639px;width:51px;height:20px;text-align:left;font:13.5px 'Liberation Sans',sans-serif;line-height:18px;padding:0 2px;padding-top:1px">0</div>
<div class="abs" style="left:566px;top:639px;width:13px;height:20px;background:#fff"></div>
<div class="t" style="left:566px;top:645px;font:10.5px 'Liberation Sans',sans-serif;">%</div>
<div class="inp" style="left:581px;top:639px;width:74px;height:20px;text-align:right;font:italic 13px 'Liberation Sans',sans-serif;line-height:18px;padding:0 1px;color:#1a0a5a;padding-top:1px">0</div>
<div class="abs" style="left:657px;top:639px;width:5px;height:20px;background:#fff"></div>
<div class="abs" style="left:216px;top:661px;width:17px;height:20px;background:#fff"></div>
<div class="t" style="left:216px;top:667px;font:8px 'Liberation Serif',serif;letter-spacing:-0.3px">0802</div>
<div class="abs" style="left:235px;top:661px;width:222px;height:20px;background:#fff"></div>
<div class="abs" style="left:459px;top:661px;width:54px;height:20px;background:#fff"></div>
<div class="inp" style="left:459px;top:665px;width:34px;height:14px;text-align:left;font:9px 'Liberation Sans',sans-serif;line-height:12px;padding:0 2px;letter-spacing:0.3px">-0.75</div>
<div class="t" style="left:235px;top:663px;font:14px 'Liberation Serif',serif;">Discount Points 1st</div>
<div class="inp" style="left:515px;top:661px;width:51px;height:20px;text-align:left;font:13.5px 'Liberation Sans',sans-serif;line-height:18px;padding:0 2px;padding-top:1px">-0.25</div>
<div class="abs" style="left:566px;top:661px;width:13px;height:20px;background:#fff"></div>
<div class="t" style="left:566px;top:667px;font:10.5px 'Liberation Sans',sans-serif;">%</div>
<div class="inp" style="left:581px;top:661px;width:74px;height:20px;text-align:right;font:italic 13px 'Liberation Sans',sans-serif;line-height:18px;padding:0 1px;color:#1a0a5a;padding-top:1px">-1375</div>
<div class="abs" style="left:657px;top:661px;width:5px;height:20px;background:#fff"></div>
<div class="abs" style="left:216px;top:683px;width:17px;height:20px;background:#fff"></div>
<div class="t" style="left:216px;top:689px;font:8px 'Liberation Serif',serif;letter-spacing:-0.3px">0802</div>
<div class="abs" style="left:235px;top:683px;width:278px;height:20px;background:#fff"></div>
<div class="t" style="left:235px;top:685px;font:14px 'Liberation Serif',serif;">Discount 2nd</div>
<div class="inp" style="left:515px;top:683px;width:51px;height:20px;text-align:left;font:13.5px 'Liberation Sans',sans-serif;line-height:18px;padding:0 2px;padding-top:1px">0</div>
<div class="abs" style="left:566px;top:683px;width:13px;height:20px;background:#fff"></div>
<div class="t" style="left:566px;top:689px;font:10.5px 'Liberation Sans',sans-serif;">%</div>
<div class="inp" style="left:581px;top:683px;width:74px;height:20px;text-align:right;font:italic 13px 'Liberation Sans',sans-serif;line-height:18px;padding:0 1px;color:#1a0a5a;padding-top:1px">0</div>
<div class="abs" style="left:657px;top:683px;width:5px;height:20px;background:#fff"></div>
<div class="abs" style="left:216px;top:705px;width:17px;height:20px;background:#fff"></div>
<div class="t" style="left:216px;top:711px;font:8px 'Liberation Serif',serif;letter-spacing:-0.3px">0804</div>
<div class="abs" style="left:235px;top:705px;width:344px;height:20px;background:#fff"></div>
<div class="t" style="left:235px;top:707px;font:14px 'Liberation Serif',serif;">Appraisal Inspection</div>
<div class="inp" style="left:581px;top:705px;width:74px;height:20px;text-align:right;font:13px 'Liberation Sans',sans-serif;line-height:18px;padding:0 1px;padding-top:1px">499</div>
<div class="abs" style="left:657px;top:705px;width:5px;height:20px;background:#fff"></div>
<div class="abs" style="left:216px;top:727px;width:17px;height:20px;background:#fff"></div>
<div class="t" style="left:216px;top:733px;font:8px 'Liberation Serif',serif;letter-spacing:-0.3px">0809</div>
<div class="abs" style="left:235px;top:727px;width:344px;height:20px;background:#fff"></div>
<div class="t" style="left:235px;top:729px;font:14px 'Liberation Serif',serif;">Processing</div>
<div class="inp" style="left:581px;top:727px;width:74px;height:20px;text-align:right;font:13px 'Liberation Sans',sans-serif;line-height:18px;padding:0 1px;padding-top:1px">649</div>
<div class="abs" style="left:657px;top:727px;width:5px;height:20px;background:#fff"></div>
<div class="abs" style="left:216px;top:749px;width:17px;height:20px;background:#fff"></div>
<div class="t" style="left:216px;top:755px;font:8px 'Liberation Serif',serif;letter-spacing:-0.3px">0809</div>
<div class="abs" style="left:235px;top:749px;width:344px;height:20px;background:#fff"></div>
<div class="t" style="left:235px;top:751px;font:14px 'Liberation Serif',serif;">Underwriting</div>
<div class="inp" style="left:581px;top:749px;width:74px;height:20px;text-align:right;font:13px 'Liberation Sans',sans-serif;line-height:18px;padding:0 1px;padding-top:1px">646</div>
<div class="abs" style="left:657px;top:749px;width:5px;height:20px;background:#fff"></div>
<div class="abs" style="left:216px;top:771px;width:17px;height:20px;background:#fff"></div>
<div class="t" style="left:216px;top:777px;font:8px 'Liberation Serif',serif;letter-spacing:-0.3px">0807</div>
<div class="abs" style="left:235px;top:771px;width:344px;height:20px;background:#fff"></div>
<div class="t" style="left:235px;top:773px;font:14px 'Liberation Serif',serif;">Flood Review</div>
<div class="inp" style="left:581px;top:771px;width:74px;height:20px;text-align:right;font:13px 'Liberation Sans',sans-serif;line-height:18px;padding:0 1px;padding-top:1px">13</div>
<div class="abs" style="left:657px;top:771px;width:5px;height:20px;background:#fff"></div>
<div class="abs" style="left:216px;top:793px;width:17px;height:20px;background:#fff"></div>
<div class="t" style="left:216px;top:799px;font:8px 'Liberation Serif',serif;letter-spacing:-0.3px">0813</div>
<div class="abs" style="left:235px;top:793px;width:344px;height:20px;background:#fff"></div>
<div class="t" style="left:235px;top:795px;font:14px 'Liberation Serif',serif;">Tax Service</div>
<div class="inp" style="left:581px;top:793px;width:74px;height:20px;text-align:right;font:13px 'Liberation Sans',sans-serif;line-height:18px;padding:0 1px;padding-top:1px">69</div>
<div class="abs" style="left:657px;top:793px;width:5px;height:20px;background:#fff"></div>
<div class="abs" style="left:216px;top:815px;width:17px;height:20px;background:#fff"></div>
<div class="t" style="left:216px;top:821px;font:8px 'Liberation Serif',serif;letter-spacing:-0.3px">0814</div>
<div class="abs" style="left:235px;top:815px;width:344px;height:20px;background:#fff"></div>
<div class="t" style="left:235px;top:817px;font:14px 'Liberation Serif',serif;">Document Prep</div>
<div class="inp" style="left:581px;top:815px;width:74px;height:20px;text-align:right;font:13px 'Liberation Sans',sans-serif;line-height:18px;padding:0 1px;padding-top:1px">0</div>
<div class="abs" style="left:657px;top:815px;width:5px;height:20px;background:#fff"></div>
<div class="t" style="left:446px;top:623px;font:9.5px 'Liberation Serif',serif;">Finance:</div>
<div class="cb" style="left:484px;top:621px;width:10px;height:10px"></div>
<div class="box" style="left:727px;top:587px;width:383px;height:253px"></div>
<div class="hd" style="left:731px;top:592px;width:375px;height:23px;font-size:18px;letter-spacing:0.6px;line-height:23px">Pre-Paid Items</div>
<div class="abs" style="left:731px;top:615px;width:375px;height:230px;background:#d0d0d0"></div>
<div class="abs" style="left:733px;top:617px;width:23px;height:20px;background:#fff"></div>
<div class="t" style="left:735px;top:623px;font:8px 'Liberation Serif',serif;letter-spacing:-0.3px">0901</div>
<div class="abs" style="left:758px;top:617px;width:167px;height:20px;background:#fff"></div>
<div class="abs" style="left:927px;top:617px;width:69px;height:20px;background:#fff"></div>
<div class="inp" style="left:927px;top:617px;width:29px;height:19px;text-align:left;font:13px 'Liberation Sans',sans-serif;line-height:17px;padding:0 2px;padding-top:1px">30</div>
<div class="t" style="left:956px;top:621px;font:11px 'Liberation Serif',serif;">days</div>
<div class="t" style="left:758px;top:619px;font:14px 'Liberation Serif',serif;">Prepaid Interest First</div>
<div class="abs" style="left:998px;top:617px;width:106px;height:20px;background:#fff"></div>
<div class="inp" style="left:998px;top:617px;width:74px;height:20px;text-align:right;font:italic 13px 'Liberation Sans',sans-serif;line-height:18px;padding:0 1px;color:#1a0a5a;padding-top:1px">2260.27</div>
<div class="abs" style="left:733px;top:639px;width:23px;height:20px;background:#fff"></div>
<div class="t" style="left:735px;top:645px;font:8px 'Liberation Serif',serif;letter-spacing:-0.3px">0901</div>
<div class="abs" style="left:758px;top:639px;width:167px;height:20px;background:#fff"></div>
<div class="abs" style="left:927px;top:639px;width:69px;height:20px;background:#fff"></div>
<div class="inp" style="left:927px;top:639px;width:29px;height:19px;text-align:left;font:13px 'Liberation Sans',sans-serif;line-height:17px;padding:0 2px;padding-top:1px">30</div>
<div class="t" style="left:956px;top:643px;font:11px 'Liberation Serif',serif;">days</div>
<div class="t" style="left:758px;top:641px;font:14px 'Liberation Serif',serif;">Prepaid Interest 2nd</div>
<div class="abs" style="left:998px;top:639px;width:106px;height:20px;background:#fff"></div>
<div class="inp" style="left:998px;top:639px;width:74px;height:20px;text-align:right;font:italic 13px 'Liberation Sans',sans-serif;line-height:18px;padding:0 1px;color:#1a0a5a;padding-top:1px">0</div>
<div class="abs" style="left:733px;top:661px;width:23px;height:20px;background:#fff"></div>
<div class="t" style="left:735px;top:667px;font:8px 'Liberation Serif',serif;letter-spacing:-0.3px">0903</div>
<div class="abs" style="left:758px;top:661px;width:238px;height:20px;background:#fff"></div>
<div class="t" style="left:758px;top:663px;font:14px 'Liberation Serif',serif;">Hazard Insurance Premium</div>
<div class="abs" style="left:998px;top:661px;width:106px;height:20px;background:#fff"></div>
<div class="inp" style="left:998px;top:661px;width:74px;height:20px;text-align:right;font:13px 'Liberation Sans',sans-serif;line-height:18px;padding:0 1px;padding-top:1px">1140</div>
<div class="abs" style="left:733px;top:683px;width:23px;height:20px;background:#fff"></div>
<div class="t" style="left:735px;top:689px;font:8px 'Liberation Serif',serif;letter-spacing:-0.3px">0904</div>
<div class="abs" style="left:758px;top:683px;width:238px;height:20px;background:#fff"></div>
<div class="t" style="left:758px;top:685px;font:14px 'Liberation Serif',serif;">Flood Insurance Premium</div>
<div class="abs" style="left:998px;top:683px;width:106px;height:20px;background:#fff"></div>
<div class="inp" style="left:998px;top:683px;width:74px;height:20px;text-align:right;font:13px 'Liberation Sans',sans-serif;line-height:18px;padding:0 1px;padding-top:1px">0</div>
<div class="abs" style="left:733px;top:705px;width:263px;height:20px;background:#fff"></div>
<div class="abs" style="left:998px;top:705px;width:106px;height:20px;background:#fff"></div>
<div class="t" style="left:733px;top:707px;font:bold 14.2px 'Liberation Serif',serif;">Subtotal of Pre-Paid Items</div>
<div class="inp" style="left:998px;top:705px;width:74px;height:20px;text-align:right;font:italic 13px 'Liberation Sans',sans-serif;line-height:18px;padding:0 1px;color:#1a0a5a;padding-top:1px">3400.27</div>
<div class="abs" style="left:733px;top:727px;width:371px;height:20px;background:#fff"></div>
<div class="t" style="left:733px;top:728px;width:371px;text-align:center;font:bold 15.75px 'Liberation Serif',serif">Reserve "Impound" Account</div>
<div class="abs" style="left:733px;top:749px;width:23px;height:20px;background:#fff"></div>
<div class="t" style="left:735px;top:755px;font:8px 'Liberation Serif',serif;letter-spacing:-0.3px">1002</div>
<div class="abs" style="left:758px;top:749px;width:167px;height:20px;background:#fff"></div>
<div class="abs" style="left:927px;top:749px;width:69px;height:20px;background:#fff"></div>
<div class="abs" style="left:998px;top:749px;width:106px;height:20px;background:#fff"></div>
<div class="t" style="left:758px;top:751px;font:14px 'Liberation Serif',serif;">Hazard Insurance</div>
<div class="inp" style="left:927px;top:749px;width:19px;height:20px;text-align:left;font:13px 'Liberation Sans',sans-serif;line-height:18px;padding:0 2px;padding-top:1px">0</div>
<div class="t" style="left:946px;top:754px;font:11px 'Liberation Serif',serif;">mo</div>
<div class="inp" style="left:998px;top:749px;width:74px;height:20px;text-align:right;font:italic 13px 'Liberation Sans',sans-serif;line-height:18px;padding:0 1px;color:#1a0a5a;padding-top:1px">0</div>
<div class="abs" style="left:733px;top:771px;width:23px;height:20px;background:#fff"></div>
<div class="t" style="left:735px;top:777px;font:8px 'Liberation Serif',serif;letter-spacing:-0.3px">1003</div>
<div class="abs" style="left:758px;top:771px;width:167px;height:20px;background:#fff"></div>
<div class="abs" style="left:927px;top:771px;width:69px;height:20px;background:#fff"></div>
<div class="abs" style="left:998px;top:771px;width:106px;height:20px;background:#fff"></div>
<div class="t" style="left:758px;top:773px;font:14px 'Liberation Serif',serif;">Mortgage Insurance</div>
<div class="inp" style="left:927px;top:771px;width:19px;height:20px;text-align:left;font:13px 'Liberation Sans',sans-serif;line-height:18px;padding:0 2px;padding-top:1px">0</div>
<div class="t" style="left:946px;top:776px;font:11px 'Liberation Serif',serif;">mo</div>
<div class="inp" style="left:998px;top:771px;width:74px;height:20px;text-align:right;font:italic 13px 'Liberation Sans',sans-serif;line-height:18px;padding:0 1px;color:#1a0a5a;padding-top:1px">0</div>
<div class="abs" style="left:733px;top:793px;width:23px;height:20px;background:#fff"></div>
<div class="t" style="left:735px;top:799px;font:8px 'Liberation Serif',serif;letter-spacing:-0.3px">1006</div>
<div class="abs" style="left:758px;top:793px;width:167px;height:20px;background:#fff"></div>
<div class="abs" style="left:927px;top:793px;width:69px;height:20px;background:#fff"></div>
<div class="abs" style="left:998px;top:793px;width:106px;height:20px;background:#fff"></div>
<div class="t" style="left:758px;top:795px;font:14px 'Liberation Serif',serif;">Property Taxes</div>
<div class="inp" style="left:927px;top:793px;width:19px;height:20px;text-align:left;font:13px 'Liberation Sans',sans-serif;line-height:18px;padding:0 2px;padding-top:1px">0</div>
<div class="t" style="left:946px;top:798px;font:11px 'Liberation Serif',serif;">mo</div>
<div class="inp" style="left:998px;top:793px;width:74px;height:20px;text-align:right;font:italic 13px 'Liberation Sans',sans-serif;line-height:18px;padding:0 1px;color:#1a0a5a;padding-top:1px">0</div>
<div class="abs" style="left:733px;top:815px;width:23px;height:20px;background:#fff"></div>
<div class="t" style="left:735px;top:821px;font:8px 'Liberation Serif',serif;letter-spacing:-0.3px">1007</div>
<div class="abs" style="left:758px;top:815px;width:167px;height:20px;background:#fff"></div>
<div class="abs" style="left:927px;top:815px;width:69px;height:20px;background:#fff"></div>
<div class="abs" style="left:998px;top:815px;width:106px;height:20px;background:#fff"></div>
<div class="t" style="left:758px;top:817px;font:14px 'Liberation Serif',serif;">Flood Insurance</div>
<div class="inp" style="left:927px;top:815px;width:19px;height:20px;text-align:left;font:13px 'Liberation Sans',sans-serif;line-height:18px;padding:0 2px;padding-top:1px">0</div>
<div class="t" style="left:946px;top:820px;font:11px 'Liberation Serif',serif;">mo</div>
<div class="inp" style="left:998px;top:815px;width:74px;height:20px;text-align:right;font:italic 13px 'Liberation Sans',sans-serif;line-height:18px;padding:0 1px;color:#1a0a5a;padding-top:1px">0</div>
<div class="btn" style="left:630px;top:564px;width:55px;height:18px;font:12.75px 'Liberation Sans',sans-serif;line-height:16px">Auto Fee</div>
</body></html>
